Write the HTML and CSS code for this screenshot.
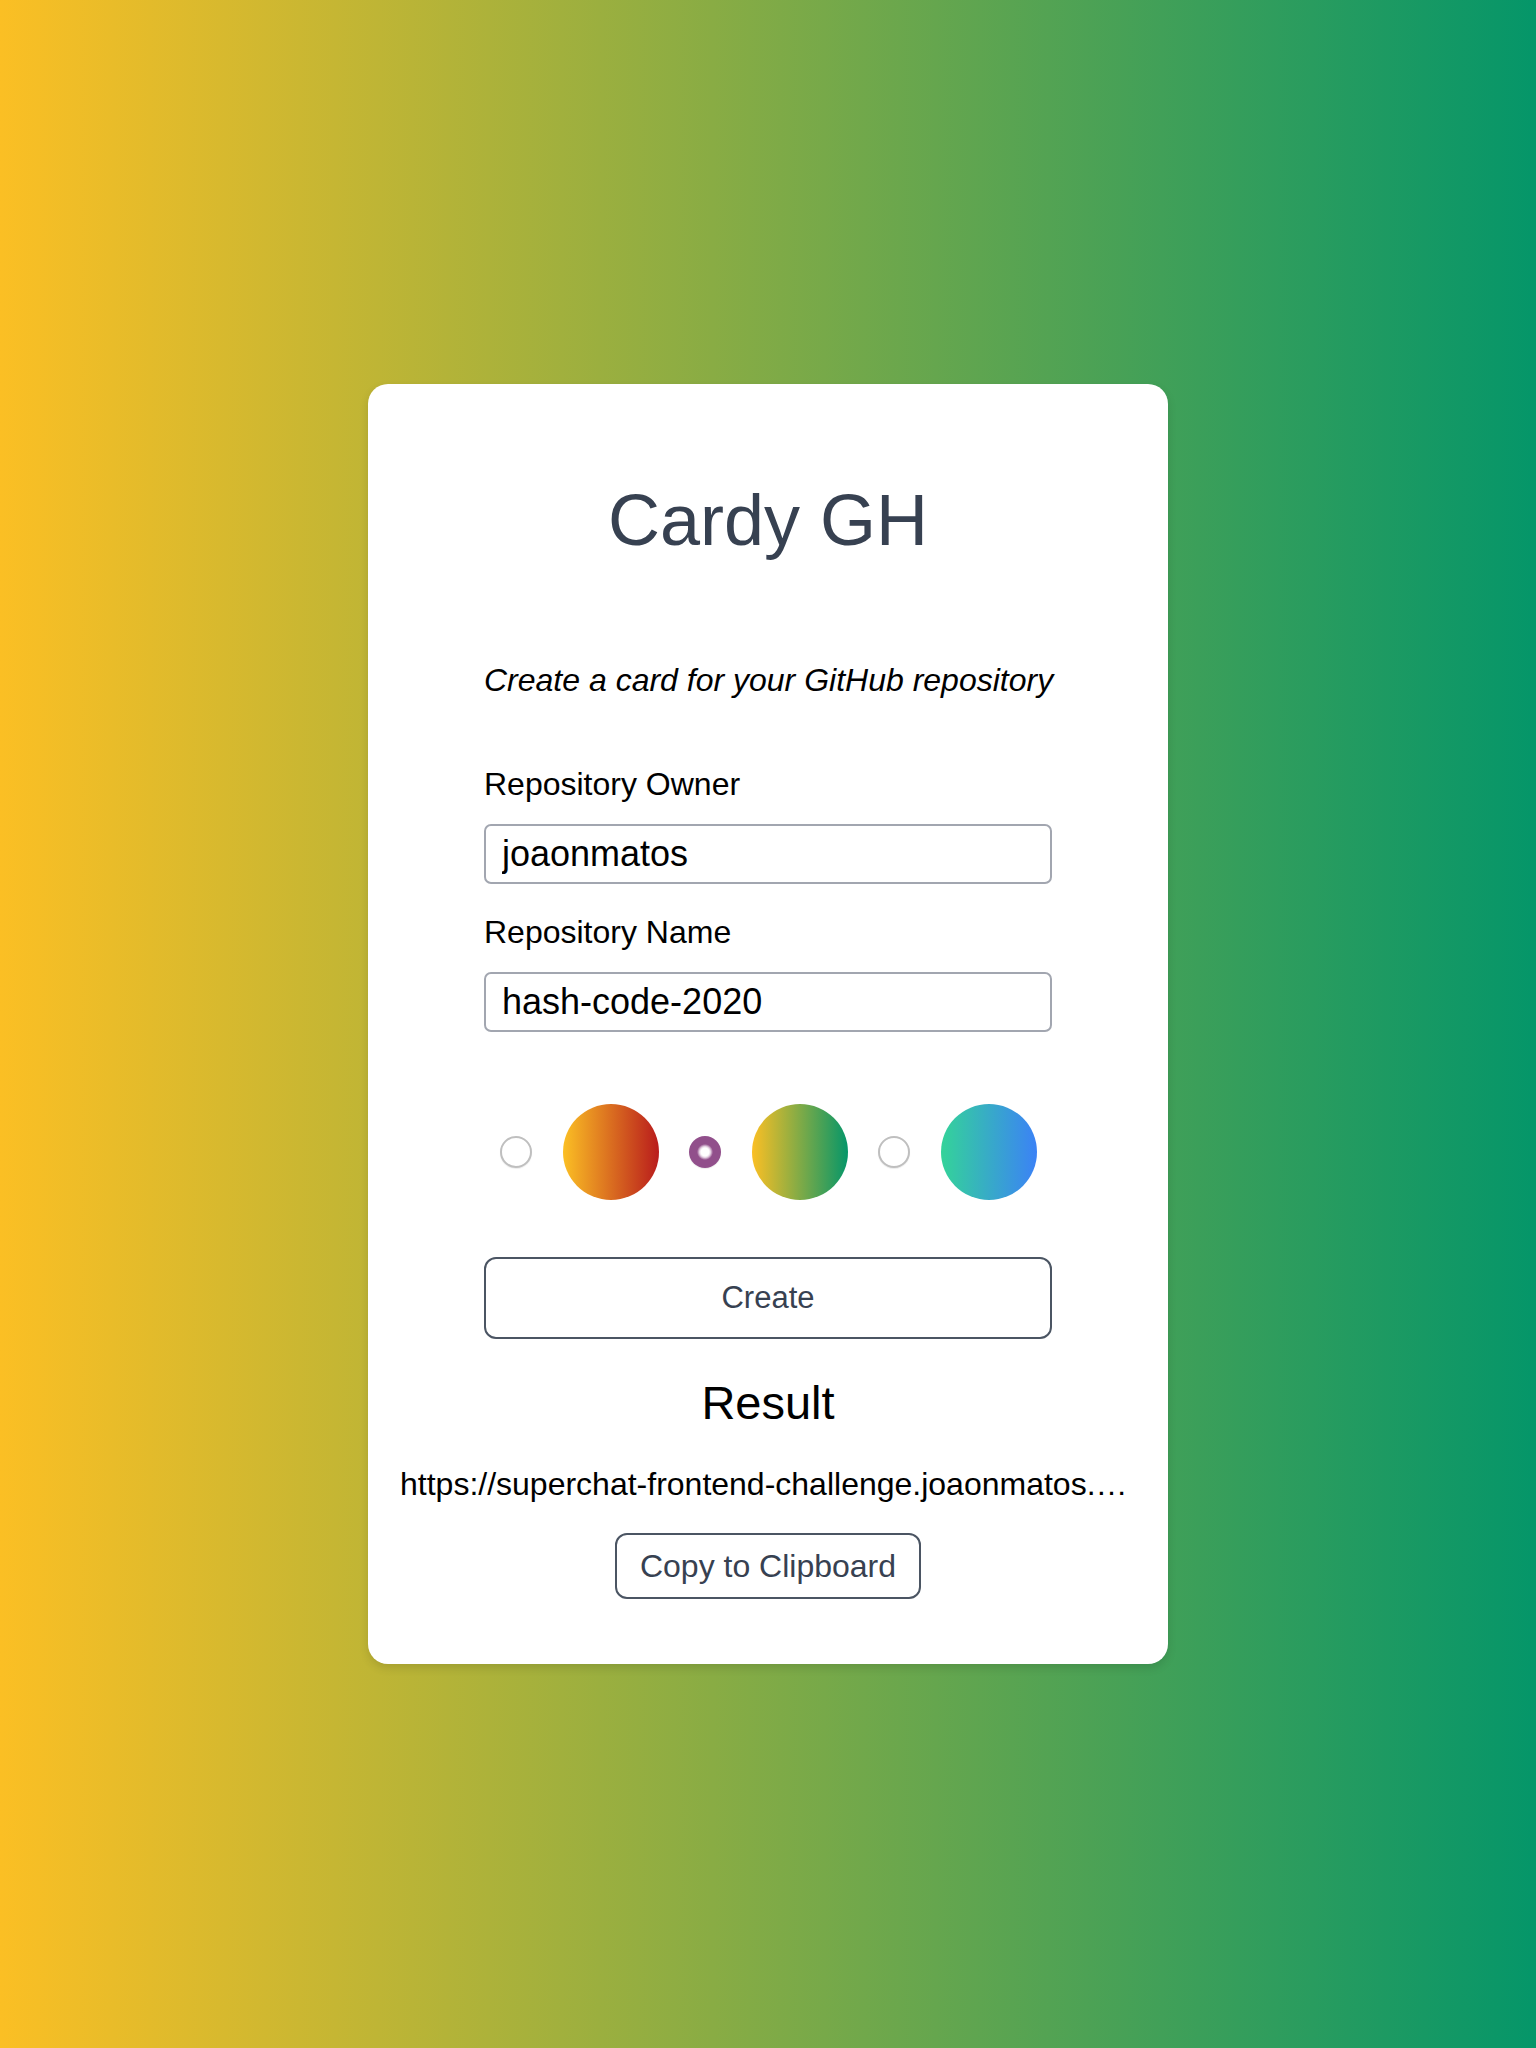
FILE: index.html
```html
<!DOCTYPE html>
<html lang="en">
<head>
<meta charset="utf-8">
<title>Cardy GH</title>
<link rel="stylesheet" href="styles.css">
</head>
<body>
<main class="page">
  <section class="card">
    <h1 class="title">Cardy GH</h1>
    <form class="form">
      <p class="subtitle">Create a card for your GitHub repository</p>
      <label class="label label-first" for="owner">Repository Owner</label>
      <input class="field" id="owner" type="text" value="joaonmatos">
      <label class="label label-second" for="repo">Repository Name</label>
      <input class="field" id="repo" type="text" value="hash-code-2020">
      <div class="themes">
        <div class="theme">
          <input class="radio" type="radio" name="theme" value="1">
          <span class="swatch swatch-sunset"></span>
        </div>
        <div class="theme">
          <input class="radio" type="radio" name="theme" value="2" checked>
          <span class="swatch swatch-forest"></span>
        </div>
        <div class="theme">
          <input class="radio" type="radio" name="theme" value="3">
          <span class="swatch swatch-ocean"></span>
        </div>
      </div>
      <button class="btn btn-create" type="button">Create</button>
    </form>
    <h2 class="result-title">Result</h2>
    <p class="result-url">https://superchat-frontend-challenge.joaonmatos.vercel.app/api/card?owner=joaonmatos&amp;repo=hash-code-2020&amp;theme=2</p>
    <div class="copy-row">
      <button class="btn btn-copy" type="button">Copy to Clipboard</button>
    </div>
  </section>
</main>
</body>
</html>
```

FILE: styles.css
```css
* {
  box-sizing: border-box;
}

html, body {
  margin: 0;
  padding: 0;
}

body {
  font-family: "Liberation Sans", Arial, sans-serif;
  color: #000;
  background: linear-gradient(to right, #fbbf24, #059669);
  min-height: 100vh;
}

.page {
  min-height: 100vh;
  display: flex;
  align-items: center;
  justify-content: center;
}

.card {
  width: 800px;
  background: #fff;
  border-radius: 20px;
  padding: 96px 32px 65px;
  box-shadow: 0 4px 10px rgba(0, 0, 0, 0.12);
  display: flex;
  flex-direction: column;
}

.title {
  margin: 0;
  font-size: 72px;
  line-height: 80px;
  font-weight: 400;
  color: #374151;
  text-align: center;
}

.form {
  width: 568px;
  margin: 0 auto;
  display: flex;
  flex-direction: column;
}

.subtitle {
  margin: 96px 0 0;
  font-size: 32px;
  line-height: 48px;
  font-style: italic;
  white-space: nowrap;
}

.label {
  font-size: 32px;
  line-height: 48px;
}

.label-first {
  margin-top: 56px;
}

.label-second {
  margin-top: 24px;
}

.field {
  margin-top: 16px;
  height: 60px;
  width: 100%;
  border: 2px solid #a2a6b0;
  border-radius: 7px;
  padding: 0 16px;
  font-family: "Liberation Sans", Arial, sans-serif;
  font-size: 36px;
  color: #000;
  background: #fff;
  outline: none;
}

.themes {
  margin-top: 72px;
  height: 96px;
  display: flex;
  justify-content: center;
  align-items: center;
  gap: 30px;
}

.theme {
  display: flex;
  align-items: center;
  gap: 31px;
}

.radio {
  appearance: none;
  -webkit-appearance: none;
  margin: 0;
  width: 32px;
  height: 32px;
  border-radius: 50%;
  border: 2.5px solid #bfbfbf;
  background: #fff;
  box-shadow: 0 1px 1px rgba(0, 0, 0, 0.08);
}

.radio:checked {
  border: none;
  background: radial-gradient(circle, #fff 0, #fff 4px, #e6d4e4 5.5px, #914f8b 8px);
}

.swatch {
  width: 96px;
  height: 96px;
  border-radius: 50%;
  display: block;
}

.swatch-sunset {
  background: linear-gradient(to right, #fbbf24, #b91c1c);
}

.swatch-forest {
  background: linear-gradient(to right, #fbbf24, #059669);
}

.swatch-ocean {
  background: linear-gradient(to right, #34d399, #3b82f6);
}

.btn {
  font-family: "Liberation Sans", Arial, sans-serif;
  color: #374151;
  background: #fff;
  border: 2px solid #4b5563;
  cursor: pointer;
}

.btn-create {
  margin-top: 57px;
  height: 82px;
  width: 100%;
  border-radius: 12px;
  font-size: 31px;
}

.result-title {
  margin: 36px 0 0;
  font-size: 47px;
  line-height: 56px;
  font-weight: 400;
  text-align: center;
}

.result-url {
  margin: 29px 0 0;
  font-size: 32px;
  line-height: 48px;
  white-space: nowrap;
  overflow: hidden;
  text-overflow: ellipsis;
}

.copy-row {
  margin-top: 25px;
  display: flex;
  justify-content: center;
}

.btn-copy {
  height: 66px;
  padding: 0 23px;
  border-radius: 12px;
  font-size: 32px;
}
```
